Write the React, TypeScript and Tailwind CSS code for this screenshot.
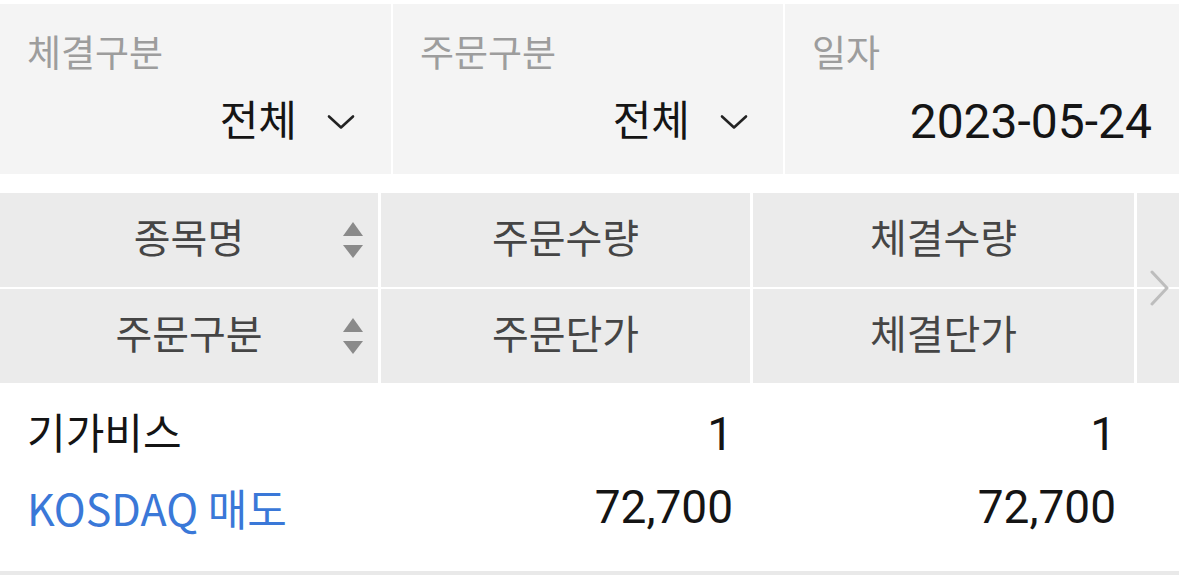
const font = "font-['Roboto','Noto_Sans_CJK_KR',sans-serif]";

const Chevron = () => (
  <svg width="28" height="16" viewBox="0 0 28 16" fill="none" className="ml-[30px]">
    <path d="M2 2.5 L14 13.5 L26 2.5" stroke="#222" strokeWidth="2.6" strokeLinecap="round" strokeLinejoin="round" />
  </svg>
);

const SortIcon = () => (
  <svg width="20" height="36" viewBox="0 0 20 36" className="absolute right-[15px] top-1/2 -translate-y-1/2">
    <path d="M10 0 L20 14 L0 14 Z" fill="#8a8a8a" />
    <path d="M0 23 L20 23 L10 36 Z" fill="#8a8a8a" />
  </svg>
);

const FilterCell = ({ label, value, width, pr, chevron }: { label: string; value: string; width: string; pr: string; chevron?: boolean }) => (
  <div className={`${width} ${pr} flex flex-col bg-[#f4f4f4] pl-[27px]`}>
    <div className="mt-[31px] text-[37px] leading-[40px] text-[#9d9d9d]">{label}</div>
    <div className="mt-[23px] flex items-center justify-end">
      <span className={`${chevron ? 'text-[42px]' : 'text-[48px]'} leading-[48px] text-[#151515]`}>{value}</span>
      {chevron && <Chevron />}
    </div>
  </div>
);

const HeadCell = ({ children, sort }: { children: string; sort?: boolean }) => (
  <div className="relative flex h-[94px] items-center justify-center bg-[#ebebeb] text-[40px] text-[#454545]">
    <span>{children}</span>
    {sort && <SortIcon />}
  </div>
);

export default function App() {
  return (
    <div className={`${font} h-[576px] w-[1179px] overflow-hidden bg-white pt-[4px]`}>
      <div className="flex h-[170px] gap-[2px]">
        <FilterCell label="체결구분" value="전체" width="w-[391px]" pr="pr-[36px]" chevron />
        <FilterCell label="주문구분" value="전체" width="w-[390px]" pr="pr-[35px]" chevron />
        <FilterCell label="일자" value="2023-05-24" width="flex-1" pr="pr-[27px]" />
      </div>

      <div className="mt-[19px] flex h-[190px] gap-[3px]">
        <div className="flex w-[378px] flex-col gap-[2px]">
          <HeadCell sort>종목명</HeadCell>
          <HeadCell sort>주문구분</HeadCell>
        </div>
        <div className="flex w-[369px] flex-col gap-[2px]">
          <HeadCell>주문수량</HeadCell>
          <HeadCell>주문단가</HeadCell>
        </div>
        <div className="flex w-[381px] flex-col gap-[2px]">
          <HeadCell>체결수량</HeadCell>
          <HeadCell>체결단가</HeadCell>
        </div>
        <div className="relative flex flex-1 flex-col gap-[2px]">
          <div className="h-[94px] bg-[#ebebeb]" />
          <div className="h-[94px] bg-[#ebebeb]" />
          <svg width="20" height="36" viewBox="0 0 20 36" fill="none" className="absolute left-[13px] top-1/2 -translate-y-1/2">
            <path d="M2 2 L17 18 L2 34" stroke="#bdbdbd" strokeWidth="3" strokeLinecap="round" strokeLinejoin="round" />
          </svg>
        </div>
      </div>

      <div className="flex h-[188px] gap-[3px] pt-[15px] leading-[73px] text-[#141414]">
        <div className="flex w-[378px] flex-col pl-[27px]">
          <span className="text-[42px]">기가비스</span>
          <span className="font-['Noto_Sans_CJK_KR',sans-serif] text-[43px] text-[#3a78d8]">KOSDAQ 매도</span>
        </div>
        <div className="flex w-[369px] flex-col items-end pr-[17px] text-[46px]">
          <span>1</span>
          <span>72,700</span>
        </div>
        <div className="flex w-[381px] flex-col items-end pr-[18px] text-[46px]">
          <span>1</span>
          <span>72,700</span>
        </div>
      </div>
      <div className="h-[4px] bg-[#e9e9e9]" />
    </div>
  );
}
